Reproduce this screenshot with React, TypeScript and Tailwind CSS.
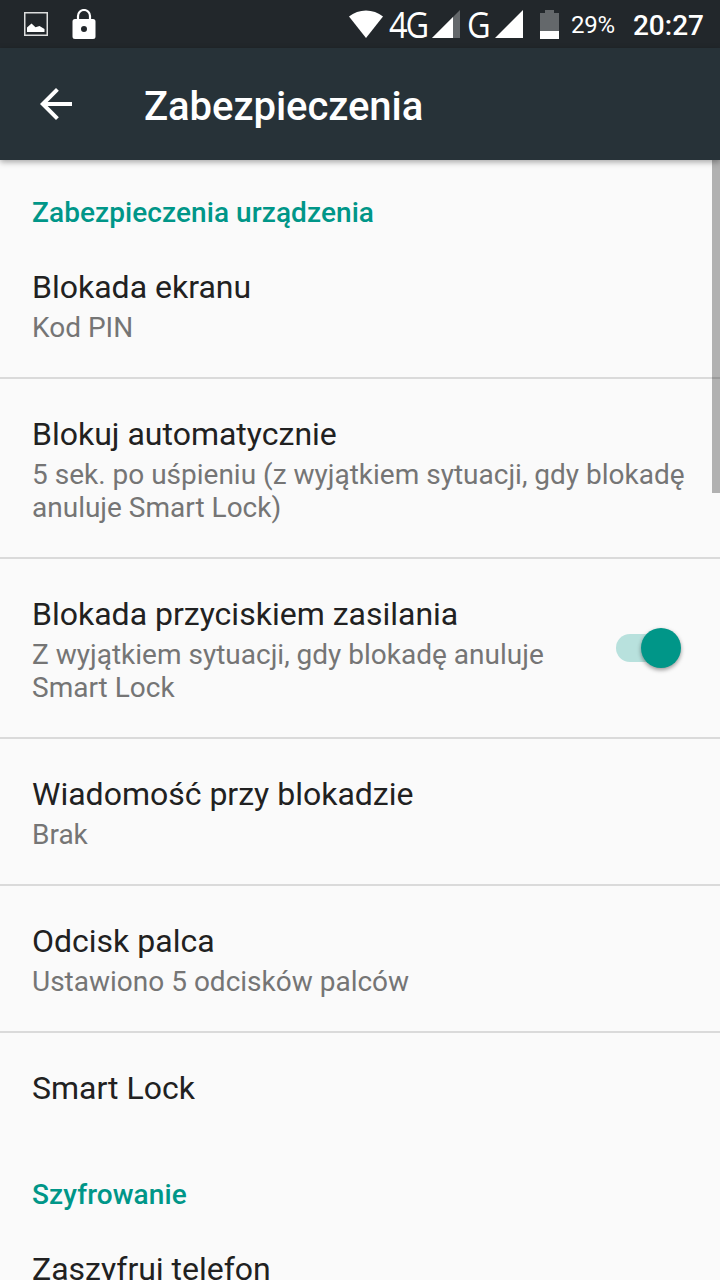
import React from 'react';

type Item = {
  title: string;
  summary?: string;
  toggle?: boolean;
};

const deviceItems: Item[] = [
  { title: 'Blokada ekranu', summary: 'Kod PIN' },
  { title: 'Blokuj automatycznie', summary: '5 sek. po uśpieniu (z wyjątkiem sytuacji, gdy blokadę anuluje Smart Lock)' },
  { title: 'Blokada przyciskiem zasilania', summary: 'Z wyjątkiem sytuacji, gdy blokadę anuluje Smart Lock', toggle: true },
  { title: 'Wiadomość przy blokadzie', summary: 'Brak' },
  { title: 'Odcisk palca', summary: 'Ustawiono 5 odcisków palców' },
  { title: 'Smart Lock' },
];

const StatusBar: React.FC = () => (
  <div className="flex h-12 shrink-0 items-center bg-[#22272b] pl-6 pr-4 text-white">
    <svg width="24" height="24" viewBox="0 0 24 24" className="shrink-0">
      <rect x="0.75" y="0.75" width="22.5" height="22.5" fill="none" stroke="#dcdddd" strokeWidth="1.5" />
      <path d="M3 20v-4.500l4.500-4 4 3.700 4-1.200 5 3V20z" fill="#fff" />
    </svg>
    <svg width="24" height="30" viewBox="0 0 24 30" className="ml-6 shrink-0">
      <path d="M6 11V7a6 6 0 0 1 12 0v4" fill="none" stroke="#fff" strokeWidth="2.2" />
      <path fillRule="evenodd" d="M3 10h18a2.5 2.5 0 0 1 2.5 2.5v15A2.5 2.5 0 0 1 21 30H3a2.5 2.5 0 0 1-2.500-2.500v-15A2.500 2.500 0 0 1 3 10zm9 7a3 3 0 1 0 0 6 3 3 0 0 0 0-6z" fill="#fff" />
    </svg>

    <div className="ml-auto flex items-center">
      <svg width="36" height="30" viewBox="0 0 36 30" className="shrink-0">
        <path d="M1 7.500C10.500-.500 25.500-.500 35 7.500L18 29z" fill="#fff" />
      </svg>
      <span className="ml-[5px] mb-0.5 w-[43px] origin-left scale-x-[0.88] font-['Open_Sans',sans-serif] text-[37px] leading-none tracking-[-2.5px]">4G</span>
      <svg width="28" height="28" viewBox="0 0 28 28" className="shrink-0">
        <path d="M28 0v28H0z" fill="#64686b" />
        <path d="M21 7v21H0z" fill="#fff" />
      </svg>
      <span className="ml-[7px] mb-0.5 w-7 origin-left scale-x-[0.88] font-['Open_Sans',sans-serif] text-[37px] leading-none">G</span>
      <svg width="28" height="28" viewBox="0 0 28 28" className="shrink-0">
        <path d="M28 0v28H0z" fill="#fff" />
      </svg>
      <svg width="19" height="29" viewBox="0 0 19 29" className="ml-[17px] shrink-0">
        <path d="M5 0h9v3h5v18H0V3h5z" fill="#64686b" />
        <path d="M0 21h19v8H0z" fill="#fff" />
      </svg>
      <span className="ml-3 mt-0.5 w-11 text-2xl tracking-[-0.2px]">29%</span>
      <span className="ml-[18px] mt-1 text-[28px] font-medium">20:27</span>
    </div>
  </div>
);

const SectionTitle: React.FC<{ children: React.ReactNode }> = ({ children }) => (
  <h2 className="h-[72px] px-8 pt-9 text-[28px] font-medium leading-[33px] tracking-[0.08px] text-[#009688]">{children}</h2>
);

const Switch: React.FC = () => (
  <div className="mr-[7px] flex h-10 w-[65px] shrink-0 items-center">
    <div className="h-7 w-[50px] rounded-full bg-[#b8e1dd]" />
    <div className="-ml-[25px] size-10 shrink-0 rounded-full bg-[#009688] shadow-[0_2px_4px_rgba(0,0,0,0.4)]" />
  </div>
);

const Row: React.FC<{ item: Item; last?: boolean }> = ({ item, last }) => (
  <div className={`flex items-center px-8 ${last ? 'pb-0.5' : 'border-b-2 border-[#dadada]'}`}>
    <div className={`min-w-0 flex-1 pt-9 pb-[33px] ${item.toggle ? 'pr-8' : ''}`}>
      <h3 className="text-[32px] leading-[38px] text-[#212121]">{item.title}</h3>
      {item.summary && <p className="mt-[5px] text-[28px] leading-[33px] text-[#757575]">{item.summary}</p>}
    </div>
    {item.toggle && <Switch />}
  </div>
);

const App: React.FC = () => {
  return (
    <div className="relative flex h-[1280px] w-[720px] flex-col overflow-hidden bg-[#fafafa] font-[Roboto,sans-serif]">
      <StatusBar />

      {/* App bar */}
      <header className="z-10 flex h-28 shrink-0 items-center bg-[#273238] pl-10 text-white shadow-[0_2px_6px_rgba(0,0,0,0.35)]">
        <svg width="32" height="32" viewBox="4 4 16 16" fill="#fff">
          <path d="M20 11H7.830l5.590-5.590L12 4l-8 8 8 8 1.410-1.410L7.830 13H20v-2z" />
        </svg>
        <h1 className="ml-[72px] mt-1.5 text-[40px] font-medium tracking-[-0.05px]">Zabezpieczenia</h1>
      </header>

      {/* Preferences */}
      <main className="min-h-0 flex-1 overflow-hidden">
        <SectionTitle>Zabezpieczenia urządzenia</SectionTitle>
        {deviceItems.map((item, i) => (
          <Row key={item.title} item={item} last={i === deviceItems.length - 1} />
        ))}
        <SectionTitle>Szyfrowanie</SectionTitle>
        <Row item={{ title: 'Zaszyfruj telefon' }} last />
      </main>

      {/* Scroll thumb */}
      <div className="absolute right-0 top-40 h-[333px] w-2 bg-black/29" />
    </div>
  );
};

export default App;
